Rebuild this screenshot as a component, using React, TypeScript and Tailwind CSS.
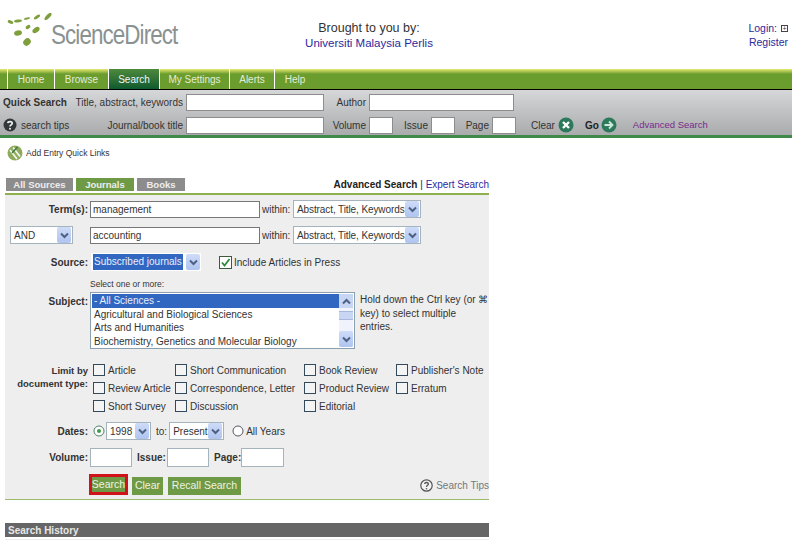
const font = "font-['Liberation_Sans',Arial,sans-serif]";

function Logo() {
  return (
    <div className="flex items-start ml-[7px] mt-[13px] w-[180px] shrink-0">
      <svg width="46" height="34" viewBox="0 0 46 34" className="shrink-0">
        <g fill="#7f9f3c">
          <ellipse cx="3.5" cy="9" rx="3" ry="1.6" transform="rotate(20 3.5 9)" />
          <ellipse cx="11" cy="8" rx="4" ry="1.4" transform="rotate(-8 11 8)" />
          <ellipse cx="20" cy="5.5" rx="3.2" ry="1" transform="rotate(-14 20 5.5)" />
          <ellipse cx="30" cy="4" rx="3.6" ry="1.4" transform="rotate(-35 30 4)" />
          <ellipse cx="41" cy="3.5" rx="4.6" ry="1.9" transform="rotate(-45 41 3.5)" />
          <ellipse cx="11" cy="20" rx="4" ry="2.6" transform="rotate(-15 11 20)" />
          <ellipse cx="21" cy="14" rx="2.6" ry="1.8" transform="rotate(-30 21 14)" />
          <ellipse cx="29" cy="17" rx="4" ry="2.4" transform="rotate(-35 29 17)" />
          <ellipse cx="20" cy="29" rx="4" ry="3.4" transform="rotate(-40 20 29)" />
        </g>
      </svg>
      <span className="mt-[5px] ml-[-2px] text-[27px] leading-[34px] tracking-[-1.1px] text-[#8a9291] origin-left scale-x-[0.83] whitespace-nowrap">ScienceDirect</span>
    </div>
  );
}

function Tab({ label, width, active }: { label: string; width: string; active?: boolean }) {
  return (
    <div
      className={`${width} h-5 flex items-center justify-center border-r border-white text-[10px] ${
        active ? "bg-gradient-to-b from-[#4d8a3c] to-[#0c5a2e] text-[#f4f4f4]" : "text-[#e4ecd6]"
      }`}
    >
      {label}
    </div>
  );
}

function Box({ className }: { className: string }) {
  return <div className={`h-[17px] bg-white border border-[#8d8d8d] ${className}`} />;
}

function Field({ className, value }: { className: string; value?: string }) {
  return (
    <div className={`h-[17px] bg-white border border-[#a5b3bd] pl-[2px] text-[10px] leading-[15px] text-[#333] ${className}`}>
      {value}
    </div>
  );
}

function Arrow() {
  return (
    <div className="w-[14px] h-[16px] shrink-0 flex items-center justify-center rounded-[2px] bg-gradient-to-b from-[#cfdcf8] to-[#aec4ef]">
      <svg width="9" height="7" viewBox="0 0 9 7">
        <path d="M1 1.5 L4.5 5 L8 1.5" fill="none" stroke="#4d6185" strokeWidth="2" />
      </svg>
    </div>
  );
}

function Select({ value, className, selected }: { value: string; className: string; selected?: boolean }) {
  return (
    <div className={`h-[18px] bg-white border border-[#a5b3bd] flex items-center justify-between pl-[3px] pr-px text-[10px] text-[#333] ${className}`}>
      <span className={`whitespace-nowrap ${selected ? "bg-[#3166c1] text-[#e8eefa] px-[1px] leading-[16px]" : ""}`}>{value}</span>
      <Arrow />
    </div>
  );
}

function Check({ label, className = "" }: { label: string; className?: string }) {
  return (
    <div className={`flex items-center gap-[3px] h-[12px] text-[10px] text-[#333] whitespace-nowrap ${className}`}>
      <div className="w-[12px] h-[12px] border border-[#334a5c] bg-[#f4f4f4] shrink-0" />
      {label}
    </div>
  );
}

function Label({ children, className = "" }: { children: React.ReactNode; className?: string }) {
  return <div className={`w-[83px] shrink-0 text-right text-[10px] font-bold text-[#333] ${className}`}>{children}</div>;
}

function TermRow({ value, left }: { value: string; left: React.ReactNode }) {
  return (
    <div className="flex items-center h-[18px]">
      <div className="w-[85px] shrink-0">{left}</div>
      <Field className="w-[170px] !border-[#777]" value={value} />
      <span className="ml-[2px] w-[31px] text-[10px] text-[#333]">within:</span>
      <Select className="w-[128px] tracking-[-0.1px]" value="Abstract, Title, Keywords" />
    </div>
  );
}

function GreenButton({ label, className }: { label: string; className: string }) {
  return (
    <div className={`h-[18px] bg-[#6f9a45] text-[#eef3e6] text-[10.5px] flex items-center justify-center ${className}`}>{label}</div>
  );
}

export default function App() {
  return (
    <div className={`${font} w-[792px] h-[540px] overflow-hidden bg-white text-[#222]`}>
      <header className="h-[69px] flex">
        <Logo />
        <div className="w-[364px] shrink-0 pt-[21px] text-center text-[11.5px] leading-[15px]">
          <div className="text-[#333] text-[12.5px]">Brought to you by:</div>
          <div className="text-[#2a2a9c]">Universiti Malaysia Perlis</div>
        </div>
        <div className="flex-1 pt-[21px] pr-[4px] text-right text-[10.5px] leading-[14px] text-[#2a2a9c]">
          <div className="flex justify-end items-center gap-[4px]">
            Login:
            <div className="w-[7px] h-[7px] border border-[#444] flex items-center justify-center text-[7px] leading-none text-[#333]">+</div>
          </div>
          <div>Register</div>
        </div>
      </header>

      <nav className="h-[20px] flex pl-[7px] bg-gradient-to-b from-[#e6ea70] via-[#6a9c2e] via-25% to-[#6a9c2e]">
        <div className="flex border-l border-white">
          <Tab label="Home" width="w-[47px]" />
          <Tab label="Browse" width="w-[54px]" />
          <Tab label="Search" width="w-[51px]" active />
          <Tab label="My Settings" width="w-[70px]" />
          <Tab label="Alerts" width="w-[45px]" />
          <Tab label="Help" width="w-[40px] !border-r-0" />
        </div>
      </nav>

      <section className="h-[49px] border-t border-black border-b-[3px] border-b-[#3f8a4b] bg-gradient-to-b from-[#d6d7d9] to-[#a9abac] pt-[4px] text-[10px]">
        <div className="flex items-center h-[17px]">
          <span className="w-[66px] pl-[3px] font-bold text-[#333] whitespace-nowrap">Quick Search</span>
          <span className="w-[117px] text-right text-[#333]">Title, abstract, keywords</span>
          <Box className="ml-[3px] w-[138px]" />
          <span className="w-[42px] text-right text-[#333]">Author</span>
          <Box className="ml-[3px] w-[145px]" />
        </div>
        <div className="flex items-center h-[18px] mt-[5px]">
          <div className="w-[66px] pl-[3px] flex items-center gap-[4px] whitespace-nowrap text-[#333]">
            <svg width="14" height="14" viewBox="0 0 14 14" className="shrink-0">
              <circle cx="7" cy="7" r="6.5" fill="#33393a" />
              <path d="M4.8 5.2 C5 3 9.2 3 9.2 5.3 C9.2 7 7 6.8 7 8.6" fill="none" stroke="#eee" strokeWidth="1.7" />
              <circle cx="7" cy="10.8" r="1" fill="#eee" />
            </svg>
            search tips
          </div>
          <span className="w-[117px] text-right text-[#333]">Journal/book title</span>
          <Box className="ml-[3px] w-[138px]" />
          <span className="w-[42px] text-right text-[#333]">Volume</span>
          <Box className="ml-[3px] w-[24px]" />
          <span className="w-[35px] text-right text-[#333]">Issue</span>
          <Box className="ml-[3px] w-[24px]" />
          <span className="w-[34px] text-right text-[#333]">Page</span>
          <Box className="ml-[3px] w-[24px]" />
          <span className="ml-[15px] text-[#333]">Clear</span>
          <svg width="16" height="16" viewBox="0 0 16 16" className="ml-[3px] shrink-0">
            <circle cx="8" cy="8" r="7.5" fill="#2c7a5b" />
            <path d="M5 5 L11 11 M11 5 L5 11" stroke="#fff" strokeWidth="2.4" />
          </svg>
          <span className="ml-[11px] font-bold text-[#222]">Go</span>
          <svg width="16" height="16" viewBox="0 0 16 16" className="ml-[2px] shrink-0">
            <circle cx="8" cy="8" r="7.5" fill="#2c7a5b" />
            <path d="M3.5 8 H11 M8 4.5 L11.5 8 L8 11.5" fill="none" stroke="#cfe8dc" strokeWidth="1.8" />
          </svg>
          <span className="ml-[16px] text-[#7a2a8c] text-[9.5px]">Advanced Search</span>
        </div>
      </section>

      <div className="h-[40px] flex items-center pl-[7px] pb-[10px] gap-[3px] text-[8.5px] text-[#333]">
        <svg width="16" height="16" viewBox="0 0 16 16" className="shrink-0">
          <circle cx="8" cy="8" r="7.5" fill="#8faa5c" />
          <path d="M3 5 L10 14 M6 2.5 L13 11.5" stroke="#f2f5ea" strokeWidth="1.8" />
          <path d="M10.5 2 L5 8" stroke="#3f7a44" strokeWidth="1.4" />
        </svg>
        Add Entry Quick Links
      </div>

      <main className="w-[484px] ml-[5px]">
        <div className="flex items-start h-[15px] justify-between">
          <div className="flex gap-[3px] ml-px text-[9.5px] font-bold text-[#eee]">
            <div className="w-[67px] h-[13px] leading-[13px] bg-[#8c8c8c] text-center">All Sources</div>
            <div className="w-[58px] h-[13px] leading-[13px] bg-[#6f9a45] text-center">Journals</div>
            <div className="w-[48px] h-[13px] leading-[13px] bg-[#8c8c8c] text-center">Books</div>
          </div>
          <div className="text-[10px] leading-[13px] text-[#222]">
            <span className="font-bold">Advanced Search</span> | <span className="text-[#2a2a9c]">Expert Search</span>
          </div>
        </div>

        <div className="h-[307px] border-t-2 border-t-[#8eb04e] border-b border-b-[#9dbb6a] bg-[#eeeeee] pt-[5px] overflow-hidden">
          <TermRow value="management" left={<Label>Term(s):</Label>} />
          <div className="mt-[8px]">
            <TermRow value="accounting" left={<Select className="ml-[5px] w-[63px]" value="AND" />} />
          </div>

          <div className="flex items-center mt-[9px] h-[18px]">
            <Label>Source:</Label>
            <Select className="ml-[3px] w-[110px] !border-0 !pl-[2px]" value="Subscribed journals" selected />
            <div className="ml-[18px] w-[13px] h-[13px] border border-[#3c5a3c] bg-white flex items-center justify-center shrink-0">
              <svg width="11" height="11" viewBox="0 0 11 11">
                <path d="M2 5.5 L4.5 8.5 L9.5 2" fill="none" stroke="#2f8a3a" strokeWidth="1.8" />
              </svg>
            </div>
            <span className="ml-[2px] text-[10px] text-[#333]">Include Articles in Press</span>
          </div>

          <div className="ml-[85px] mt-[7px] h-[13px] text-[8.5px] leading-[13px] text-[#333]">Select one or more:</div>

          <div className="flex mt-px">
            <Label className="pt-[2px]">Subject:</Label>
            <div className="ml-[2px] w-[265px] h-[57px] bg-white border border-[#8aa0b0] flex p-px text-[10px] leading-[13.5px] text-[#333] shrink-0">
              <div className="flex-1 whitespace-nowrap overflow-hidden">
                <div className="bg-[#3166c1] text-[#e8eefa] pl-[2px]">- All Sciences -</div>
                <div className="pl-[2px]">Agricultural and Biological Sciences</div>
                <div className="pl-[2px]">Arts and Humanities</div>
                <div className="pl-[2px]">Biochemistry, Genetics and Molecular Biology</div>
              </div>
              <div className="w-[14px] flex flex-col items-center bg-[#f0f3fb]">
                <div className="w-[14px] h-[14px] bg-[#c8d6f4] flex items-center justify-center">
                  <svg width="9" height="7" viewBox="0 0 9 7">
                    <path d="M1 5.5 L4.5 2 L8 5.5" fill="none" stroke="#4d6185" strokeWidth="2" />
                  </svg>
                </div>
                <div className="mt-[3px] w-[14px] h-[9px] bg-[#c8d6f4] border-y border-[#a8b8dc]" />
                <div className="mt-auto">
                  <Arrow />
                </div>
              </div>
            </div>
            <div className="ml-[5px] pt-[1px] text-[10px] leading-[13.5px] text-[#333] whitespace-nowrap">
              Hold down the Ctrl key (or ⌘<br />
              key) to select multiple<br />
              entries.
            </div>
          </div>

          <div className="flex mt-[15px]">
            <div className="w-[83px] shrink-0 text-right text-[9.5px] leading-[13px] font-bold text-[#333]">
              <div>Limit by</div>
              <div>document type:</div>
            </div>
            <div className="ml-[5px] grid grid-cols-[82px_129px_92px_94px] gap-y-[6px]">
              <Check label="Article" />
              <Check label="Short Communication" />
              <Check label="Book Review" />
              <Check label="Publisher's Note" />
              <Check label="Review Article" />
              <Check label="Correspondence, Letter" />
              <Check label="Product Review" />
              <Check label="Erratum" />
              <Check label="Short Survey" />
              <Check label="Discussion" />
              <Check className="col-span-2" label="Editorial" />
            </div>
          </div>

          <div className="flex items-center mt-[10px] h-[18px] text-[10px] text-[#333]">
            <Label>Dates:</Label>
            <svg width="12" height="12" viewBox="0 0 12 12" className="ml-[5px] shrink-0">
              <circle cx="6" cy="6" r="5" fill="#fff" stroke="#4f7f6a" />
              <circle cx="6" cy="6" r="2" fill="#3f9a4b" />
            </svg>
            <Select className="ml-px w-[45px]" value="1998" />
            <span className="ml-[5px]">to:</span>
            <Select className="ml-[2px] w-[55px]" value="Present" />
            <svg width="12" height="12" viewBox="0 0 12 12" className="ml-[8px] shrink-0">
              <circle cx="6" cy="6" r="5" fill="#fff" stroke="#556" />
            </svg>
            <span className="ml-[2px]">All Years</span>
          </div>

          <div className="flex items-center mt-[8px] h-[19px] text-[10px]">
            <Label>Volume:</Label>
            <div className="ml-[2px] w-[42px] h-[19px] bg-white border border-[#a5b3bd]" />
            <span className="ml-[5px] w-[30px] text-[#333] font-bold">Issue:</span>
            <div className="w-[42px] h-[19px] bg-white border border-[#a5b3bd]" />
            <span className="ml-[5px] w-[25px] text-right font-bold text-[#333]">Page:</span>
            <div className="ml-[2px] w-[43px] h-[19px] bg-white border border-[#a5b3bd]" />
          </div>

          <div className="flex items-end justify-between mt-[7px] h-[21px]">
            <div className="flex items-end ml-[84px]">
              <div className="w-[39px] h-[21px] border-[3px] border-[#d0121a] bg-[#6f9a45] text-[#eef3e6] text-[10.5px] flex items-center justify-center">Search</div>
              <GreenButton label="Clear" className="ml-[4px] w-[31px]" />
              <GreenButton label="Recall Search" className="ml-[5px] w-[73px]" />
            </div>
            <div className="flex items-center gap-[3px] mb-[2px] text-[10px] text-[#777]">
              <svg width="13" height="13" viewBox="0 0 13 13">
                <circle cx="6.5" cy="6.5" r="5.7" fill="#f2f2f2" stroke="#555" strokeWidth="1.2" />
                <path d="M4.6 5 C4.8 3 8.4 3 8.4 5 C8.4 6.4 6.5 6.3 6.5 8" fill="none" stroke="#555" strokeWidth="1.3" />
                <circle cx="6.5" cy="9.7" r=".8" fill="#555" />
              </svg>
              Search Tips
            </div>
          </div>
        </div>

        <div className="mt-[23px] h-[14px] bg-[#666666] pl-[3px] text-[10px] leading-[15px] font-bold text-[#e8e8e8]">Search History</div>
        <div className="mt-[2px] h-px bg-[#eee]" />
      </main>
    </div>
  );
}
